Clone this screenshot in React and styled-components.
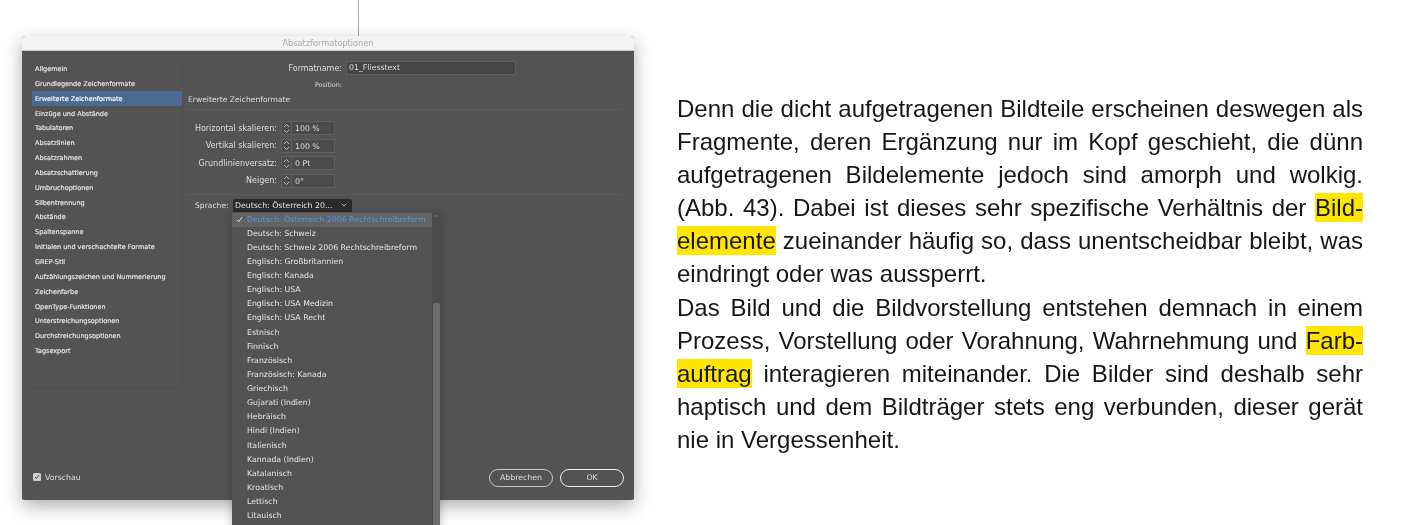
import styled, { createGlobalStyle } from "styled-components";

const Global = createGlobalStyle`
  html, body { margin: 0; padding: 0; background: #fff; }
`;

const Page = styled.div`
  display: flex;
  width: 1401px;
  height: 525px;
  overflow: hidden;
  background: #fff;
`;

const Left = styled.div`
  width: 677px;
  flex: none;
  padding-left: 22px;
  box-sizing: border-box;
`;

const Stem = styled.div`
  width: 1px;
  height: 36px;
  margin-left: 336px;
  background: #a9a9a9;
`;

const Dialog = styled.div`
  position: relative;
  display: flex;
  flex-direction: column;
  width: 612px;
  height: 464px;
  border-radius: 4px 4px 2px 2px;
  background: #535353;
  box-shadow: 0 6px 18px rgba(0, 0, 0, 0.32);
  font-family: "DejaVu Sans", sans-serif;
  color: #dedede;
  filter: blur(0.35px);
`;

const TitleBar = styled.div`
  height: 15px;
  flex: none;
  border-radius: 4px 4px 0 0;
  background: #f3f3f3;
  border-bottom: 1px solid #c9c9c9;
  box-sizing: border-box;
  text-align: center;
  font-size: 8.2px;
  line-height: 14px;
  color: #a8a8a8;
`;

const Body = styled.div`
  display: flex;
  flex: 1;
  min-height: 0;
  padding: 10px 14px 0 10px;
`;

const Sidebar = styled.ul`
  width: 150px;
  height: 327px;
  flex: none;
  margin: 0;
  padding: 0;
  list-style: none;
  box-sizing: content-box;
  border-right: 1px solid #4e4e4e;
  border-bottom: 1px solid #4e4e4e;
  display: flex;
  flex-direction: column;
`;

const SideItem = styled.li`
  height: 14.85px;
  flex: none;
  padding-left: 3px;
  font-size: 6.5px;
  line-height: 16px;
  white-space: nowrap;
  color: ${(p) => (p.$active ? "#ffffff" : "#e8e8e8")};
  background: ${(p) => (p.$active ? "#4a6a92" : "transparent")};
  -webkit-text-stroke: 0.15px currentColor;
`;

const Main = styled.div`
  flex: 1;
  min-width: 0;
  padding-left: 5px;
  display: flex;
  flex-direction: column;
`;

const NameRow = styled.div`
  display: flex;
  align-items: center;
  height: 14px;
  gap: 4px;
`;

const NameLabel = styled.div`
  width: 154px;
  text-align: right;
  font-size: 8px;
`;

const NameInput = styled.div`
  width: 170px;
  height: 14px;
  box-sizing: border-box;
  padding-left: 2px;
  background: #464646;
  border: 1px solid #5f5f5f;
  font-size: 7.8px;
  line-height: 12px;
`;

const PositionLabel = styled.div`
  width: 154px;
  margin-top: 3px;
  text-align: right;
  font-size: 6.4px;
  line-height: 14px;
`;

const SectionTitle = styled.div`
  font-size: 7.6px;
  line-height: 14px;
  height: 14px;
  margin-top: 1px;
  margin-bottom: 2px;
`;

const Rule = styled.div`
  height: 1px;
  background: #5c5c5c;
`;

const Fields = styled.div`
  display: flex;
  flex-direction: column;
  gap: 3.5px;
  margin-top: 11px;
  margin-bottom: 6px;
`;

const FieldRow = styled.div`
  display: flex;
  align-items: center;
  height: 14px;
`;

const FieldLabel = styled.div`
  width: 89px;
  margin-right: 4px;
  text-align: right;
  font-size: 8px;
  white-space: nowrap;
`;

const Spinner = styled.div`
  display: flex;
  align-items: center;
  justify-content: center;
  width: 11px;
  height: 14px;
  box-sizing: border-box;
  border: 1px solid #5f5f5f;
  background: #4d4d4d;
`;

const FieldInput = styled.div`
  width: 43px;
  height: 14px;
  box-sizing: border-box;
  padding-left: 3px;
  border: 1px solid #5f5f5f;
  border-left: 0;
  background: #4b4b4b;
  font-size: 7.8px;
  line-height: 13px;
`;

const LangRow = styled.div`
  position: relative;
  display: flex;
  align-items: center;
  height: 13px;
  margin-top: 4px;
  padding-left: 7px;
`;

const LangLabel = styled.div`
  width: 38px;
  font-size: 7.6px;
`;

const LangSelect = styled.div`
  display: flex;
  align-items: center;
  justify-content: space-between;
  width: 119px;
  height: 13px;
  box-sizing: border-box;
  padding: 0 5px 0 2px;
  border-radius: 2px 2px 0 0;
  background: #2b2b2b;
  font-size: 7.8px;
  color: #e8e8e8;
  white-space: nowrap;
`;

const Menu = styled.div`
  position: absolute;
  z-index: 2;
  top: 13px;
  left: 44px;
  display: flex;
  width: 208px;
  height: 320px;
  background: #535353;
  box-shadow: 0 3px 10px rgba(0, 0, 0, 0.25);
`;

const MenuList = styled.div`
  flex: 1;
  min-width: 0;
  padding-top: 1px;
`;

const MenuItem = styled.div`
  position: relative;
  height: 14.13px;
  padding-left: 15px;
  font-size: 7.8px;
  line-height: 14.13px;
  white-space: nowrap;
  color: ${(p) => (p.$active ? "#4b9bdc" : "#e6e6e6")};
  background: ${(p) => (p.$active ? "#636363" : "transparent")};
`;

const Check = styled.svg`
  position: absolute;
  left: 4px;
  top: 3.5px;
  width: 7px;
  height: 7px;
`;

const Track = styled.div`
  position: relative;
  width: 8px;
  flex: none;
  background: #4b4b4b;
`;

const Thumb = styled.div`
  position: absolute;
  left: 1px;
  right: 0;
  top: 91px;
  bottom: 0;
  border-radius: 3px;
  background: #6d6d6d;
`;

const ScrollUp = styled.svg`
  position: absolute;
  left: 2px;
  top: 2px;
  width: 5px;
  height: 4px;
`;

const Footer = styled.div`
  display: flex;
  align-items: center;
  justify-content: space-between;
  height: 18px;
  flex: none;
  margin-bottom: 13px;
  padding: 0 10px 0 11px;
`;

const Preview = styled.div`
  display: flex;
  align-items: center;
  gap: 4px;
  padding-bottom: 2px;
  font-size: 7.8px;
`;

const Box = styled.div`
  display: flex;
  align-items: center;
  justify-content: center;
  width: 8px;
  height: 8px;
  border-radius: 1.5px;
  background: #cfcfcf;
`;

const Buttons = styled.div`
  display: flex;
  gap: 7px;
`;

const Pill = styled.div`
  width: 64px;
  height: 18px;
  box-sizing: border-box;
  border-radius: 9px;
  border: ${(p) => (p.$primary ? "1.5px solid #f0f0f0" : "1px solid #c9c9c9")};
  text-align: center;
  font-size: 7.8px;
  line-height: ${(p) => (p.$primary ? "15px" : "16px")};
`;

const Right = styled.div`
  width: 686px;
  flex: none;
  padding-top: 92px;
  font-family: "Liberation Sans", Arial, sans-serif;
  font-size: 24px;
  color: #161616;
  filter: blur(0.25px);
`;

const Line = styled.div`
  height: 33.1px;
  line-height: 33.1px;
  white-space: ${(p) => (p.$last ? "nowrap" : "normal")};
  text-align: ${(p) => (p.$last ? "left" : "justify")};
  text-align-last: ${(p) => (p.$last ? "left" : "justify")};
`;

const Mark = styled.span`
  background: #ffe500;
  padding: 1px 0;
`;

const sideItems = [
  "Allgemein",
  "Grundlegende Zeichenformate",
  "Erweiterte Zeichenformate",
  "Einzüge und Abstände",
  "Tabulatoren",
  "Absatzlinien",
  "Absatzrahmen",
  "Absatzschattierung",
  "Umbruchoptionen",
  "Silbentrennung",
  "Abstände",
  "Spaltenspanne",
  "Initialen und verschachtelte Formate",
  "GREP-Stil",
  "Aufzählungszeichen und Nummerierung",
  "Zeichenfarbe",
  "OpenType-Funktionen",
  "Unterstreichungsoptionen",
  "Durchstreichungsoptionen",
  "Tagsexport",
];

const fields = [
  ["Horizontal skalieren:", "100 %"],
  ["Vertikal skalieren:", "100 %"],
  ["Grundlinienversatz:", "0 Pt"],
  ["Neigen:", "0°"],
];

const languages = [
  "Deutsch: Österreich 2006 Rechtschreibreform",
  "Deutsch: Schweiz",
  "Deutsch: Schweiz 2006 Rechtschreibreform",
  "Englisch: Großbritannien",
  "Englisch: Kanada",
  "Englisch: USA",
  "Englisch: USA Medizin",
  "Englisch: USA Recht",
  "Estnisch",
  "Finnisch",
  "Französisch",
  "Französisch: Kanada",
  "Griechisch",
  "Gujarati (Indien)",
  "Hebräisch",
  "Hindi (Indien)",
  "Italienisch",
  "Kannada (Indien)",
  "Katalanisch",
  "Kroatisch",
  "Lettisch",
  "Litauisch",
];

function SpinIcon() {
  return (
    <svg width="7" height="11" viewBox="0 0 7 11" fill="none" stroke="#d0d0d0" strokeWidth="0.8">
      <path d="M1 4 L3.5 1.5 L6 4" />
      <path d="M1 7 L3.5 9.5 L6 7" />
    </svg>
  );
}

export default function App() {
  return (
    <Page>
      <Global />
      <Left>
        <Stem />
        <Dialog>
          <TitleBar>Absatzformatoptionen</TitleBar>
          <Body>
            <Sidebar>
              {sideItems.map((item, i) => (
                <SideItem key={item} $active={i === 2}>
                  {item}
                </SideItem>
              ))}
            </Sidebar>
            <Main>
              <NameRow>
                <NameLabel>Formatname:</NameLabel>
                <NameInput>01_Fliesstext</NameInput>
              </NameRow>
              <PositionLabel>Position:</PositionLabel>
              <SectionTitle>Erweiterte Zeichenformate</SectionTitle>
              <Rule />
              <Fields>
                {fields.map(([label, value]) => (
                  <FieldRow key={label}>
                    <FieldLabel>{label}</FieldLabel>
                    <Spinner>
                      <SpinIcon />
                    </Spinner>
                    <FieldInput>{value}</FieldInput>
                  </FieldRow>
                ))}
              </Fields>
              <Rule />
              <LangRow>
                <LangLabel>Sprache:</LangLabel>
                <LangSelect>
                  Deutsch: Österreich 20...
                  <svg width="6" height="4" viewBox="0 0 6 4" fill="none" stroke="#d8d8d8" strokeWidth="0.8">
                    <path d="M0.8 0.8 L3 3 L5.2 0.8" />
                  </svg>
                </LangSelect>
                <Menu>
                  <MenuList>
                    {languages.map((lang, i) => (
                      <MenuItem key={lang} $active={i === 0}>
                        {i === 0 && (
                          <Check viewBox="0 0 7 7" fill="none" stroke="#e0e0e0" strokeWidth="1">
                            <path d="M0.8 3.8 L2.6 5.8 L6.2 1" />
                          </Check>
                        )}
                        {lang}
                      </MenuItem>
                    ))}
                  </MenuList>
                  <Track>
                    <ScrollUp viewBox="0 0 5 4" fill="none" stroke="#8f8f8f" strokeWidth="0.7">
                      <path d="M0.8 3 L2.5 1 L4.2 3" />
                    </ScrollUp>
                    <Thumb />
                  </Track>
                </Menu>
              </LangRow>
            </Main>
          </Body>
          <Footer>
            <Preview>
              <Box>
                <svg width="6" height="6" viewBox="0 0 6 6" fill="none" stroke="#444" strokeWidth="1">
                  <path d="M1 3 L2.5 4.6 L5 1.2" />
                </svg>
              </Box>
              Vorschau
            </Preview>
            <Buttons>
              <Pill>Abbrechen</Pill>
              <Pill $primary>OK</Pill>
            </Buttons>
          </Footer>
        </Dialog>
      </Left>
      <Right>
        <Line>Denn die dicht aufgetragenen Bildteile erscheinen deswegen als</Line>
        <Line>Fragmente, deren Ergänzung nur im Kopf geschieht, die dünn</Line>
        <Line>aufgetragenen Bildelemente jedoch sind amorph und wolkig.</Line>
        <Line>(Abb. 43). Dabei ist dieses sehr spezifische Verhältnis der <Mark>Bild-</Mark></Line>
        <Line><Mark>elemente</Mark> zueinander häufig so, dass unentscheidbar bleibt, was</Line>
        <Line $last>eindringt oder was aussperrt.</Line>
        <Line>Das Bild und die Bildvorstellung entstehen demnach in einem</Line>
        <Line>Prozess, Vorstellung oder Vorahnung, Wahrnehmung und <Mark>Farb-</Mark></Line>
        <Line><Mark>auftrag</Mark> interagieren miteinander. Die Bilder sind deshalb sehr</Line>
        <Line>haptisch und dem Bildträger stets eng verbunden, dieser gerät</Line>
        <Line $last>nie in Vergessenheit.</Line>
      </Right>
    </Page>
  );
}
